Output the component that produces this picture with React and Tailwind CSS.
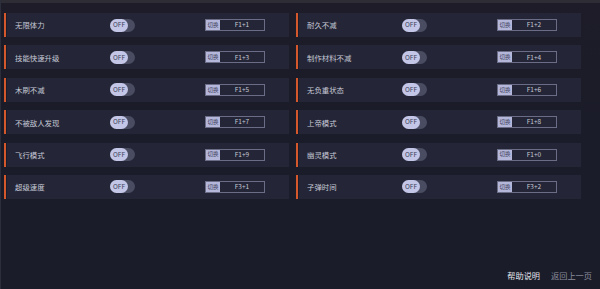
import React from "react";

const left = [
  ["无限体力", "F1+1"],
  ["技能快速升级", "F1+3"],
  ["木刷不减", "F1+5"],
  ["不被敌人发现", "F1+7"],
  ["飞行模式", "F1+9"],
  ["超级速度", "F3+1"],
];

const right = [
  ["耐久不减", "F1+2"],
  ["制作材料不减", "F1+4"],
  ["无负重状态", "F1+6"],
  ["上帝模式", "F1+8"],
  ["幽灵模式", "F1+0"],
  ["子弹时间", "F3+2"],
];

const Row = ({ label, keys }) => (
  <div className="flex h-[24px] items-stretch">
    <div className="w-[2px] bg-[#d4582c]" />
    <div className="ml-[1px] flex w-[282px] items-center bg-[#242637]">
      <span className="w-[103px] pl-[8px] text-[7.4px] text-[#c6c8d6]">{label}</span>
      <div className="flex h-[13px] w-[25px] items-center rounded-full bg-[#4a4c62]">
        <div className="flex h-[13px] w-[18px] items-center justify-center rounded-full bg-[#c3c6e6] text-[6.5px] text-[#3b3d58]">
          OFF
        </div>
      </div>
      <div className="ml-[70px] flex h-[12px] w-[60px] items-stretch border border-[#6a6d85]">
        <div className="flex w-[14px] items-center justify-center bg-[#b4b7da] text-[5.5px] text-[#3b3d58]">
          切换
        </div>
        <div className="flex flex-1 items-center justify-center text-[6.5px] text-[#c4c6d4]">
          {keys}
        </div>
      </div>
    </div>
  </div>
);

const Column = ({ items }) => (
  <div className="flex flex-col gap-[8.4px]">
    {items.map(([l, k]) => (
      <Row key={l} label={l} keys={k} />
    ))}
  </div>
);

export default function App() {
  return (
    <div
      className="relative flex h-[289px] w-[600px] flex-col overflow-hidden border-l border-[#2c2e3c] bg-[#1a1c2a]"
      style={{ fontFamily: '"Noto Sans CJK SC", "Noto Sans", sans-serif' }}
    >
      <div className="h-[3px] bg-[#2e2d36]" />
      <div className="flex gap-[7px] bg-gradient-to-b from-[#1d1c28] to-[#1a1c2a] pl-[3px] pt-[10px] pb-[10px]">
        <Column items={left} />
        <Column items={right} />
      </div>
      <div className="mt-auto flex justify-end gap-[11px] pb-[8px] pr-[8px] text-[8.2px]">
        <span className="text-[#e4e5ec]">帮助说明</span>
        <span className="text-[#8a8c9c]">返回上一页</span>
      </div>
    </div>
  );
}
